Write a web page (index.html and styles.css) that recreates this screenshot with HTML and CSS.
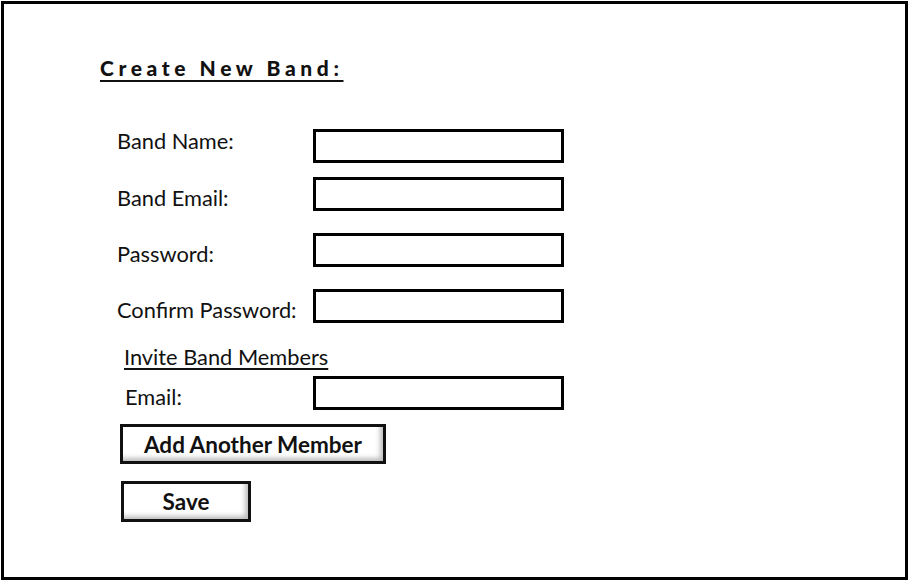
FILE: index.html
```html
<!DOCTYPE html>
<html>
<head>
<meta charset="utf-8">
<link rel="stylesheet" href="styles.css">
</head>
<body>
<div class="frame">
  <h1 class="title">Create New Band:</h1>
  <div class="fields">
    <div class="row r1"><span class="label">Band Name:</span><div class="input"></div></div>
    <div class="row r2"><span class="label">Band Email:</span><div class="input"></div></div>
    <div class="row r3"><span class="label">Password:</span><div class="input"></div></div>
    <div class="row r4"><span class="label">Confirm Password:</span><div class="input"></div></div>
  </div>
  <div class="invite">Invite Band Members</div>
  <div class="row r5"><span class="label email">Email:</span><div class="input"></div></div>
  <div class="btn add">Add Another Member</div>
  <div class="btn save">Save</div>
</div>
</body>
</html>
```
FILE: styles.css
```css
html, body {
  margin: 0;
  padding: 0;
  background: #fff;
}
body {
  padding: 1px;
  font-family: Lato, "Open Sans", sans-serif;
  color: #111;
}
.frame {
  box-sizing: border-box;
  width: 907px;
  height: 579px;
  border: 3px solid #000;
  padding-left: 96px;
  padding-top: 52px;
}
.title {
  margin: 0;
  display: inline-block;
  font-size: 21px;
  font-weight: 900;
  letter-spacing: 4.6px;
  line-height: 24px;
  text-decoration: underline;
  text-decoration-thickness: 2px;
  text-underline-offset: 4px;
}
.fields {
  margin-top: 49px;
}
.row {
  display: flex;
  align-items: center;
  height: 34px;
}
.r2 { margin-top: 14px; }
.r3, .r4 { margin-top: 22px; }
.label {
  width: 213px;
  padding-left: 17px;
  box-sizing: border-box;
  font-size: 21.8px;
  white-space: nowrap;
}
.r1 .label { margin-top: -11px; }
.r2 .label { margin-top: 6px; }
.r3 .label { margin-top: 6px; }
.r4 .label { margin-top: 6px; }
.input {
  box-sizing: border-box;
  width: 251px;
  height: 34px;
  border: 3px solid #000;
}
.invite {
  display: inline-block;
  margin-top: 22px;
  margin-left: 24px;
  font-size: 21.8px;
  line-height: 24px;
  text-decoration: underline;
  text-underline-offset: 3px;
}
.r5 { margin-top: 7px; }
.r5 .label { padding-left: 25px; margin-top: 6px; }
.btn {
  box-sizing: border-box;
  display: flex;
  align-items: center;
  justify-content: center;
  border: 3px solid #111;
  background: #fff;
  box-shadow: inset -5px -5px 5px -2px #bdbdbd;
  font-size: 22.5px;
  font-weight: bold;
  height: 40px;
}
.add {
  margin-top: 14px;
  margin-left: 20px;
  width: 266px;
}
.save {
  margin-top: 17px;
  margin-left: 21px;
  width: 130px;
  height: 41px;
}
```
